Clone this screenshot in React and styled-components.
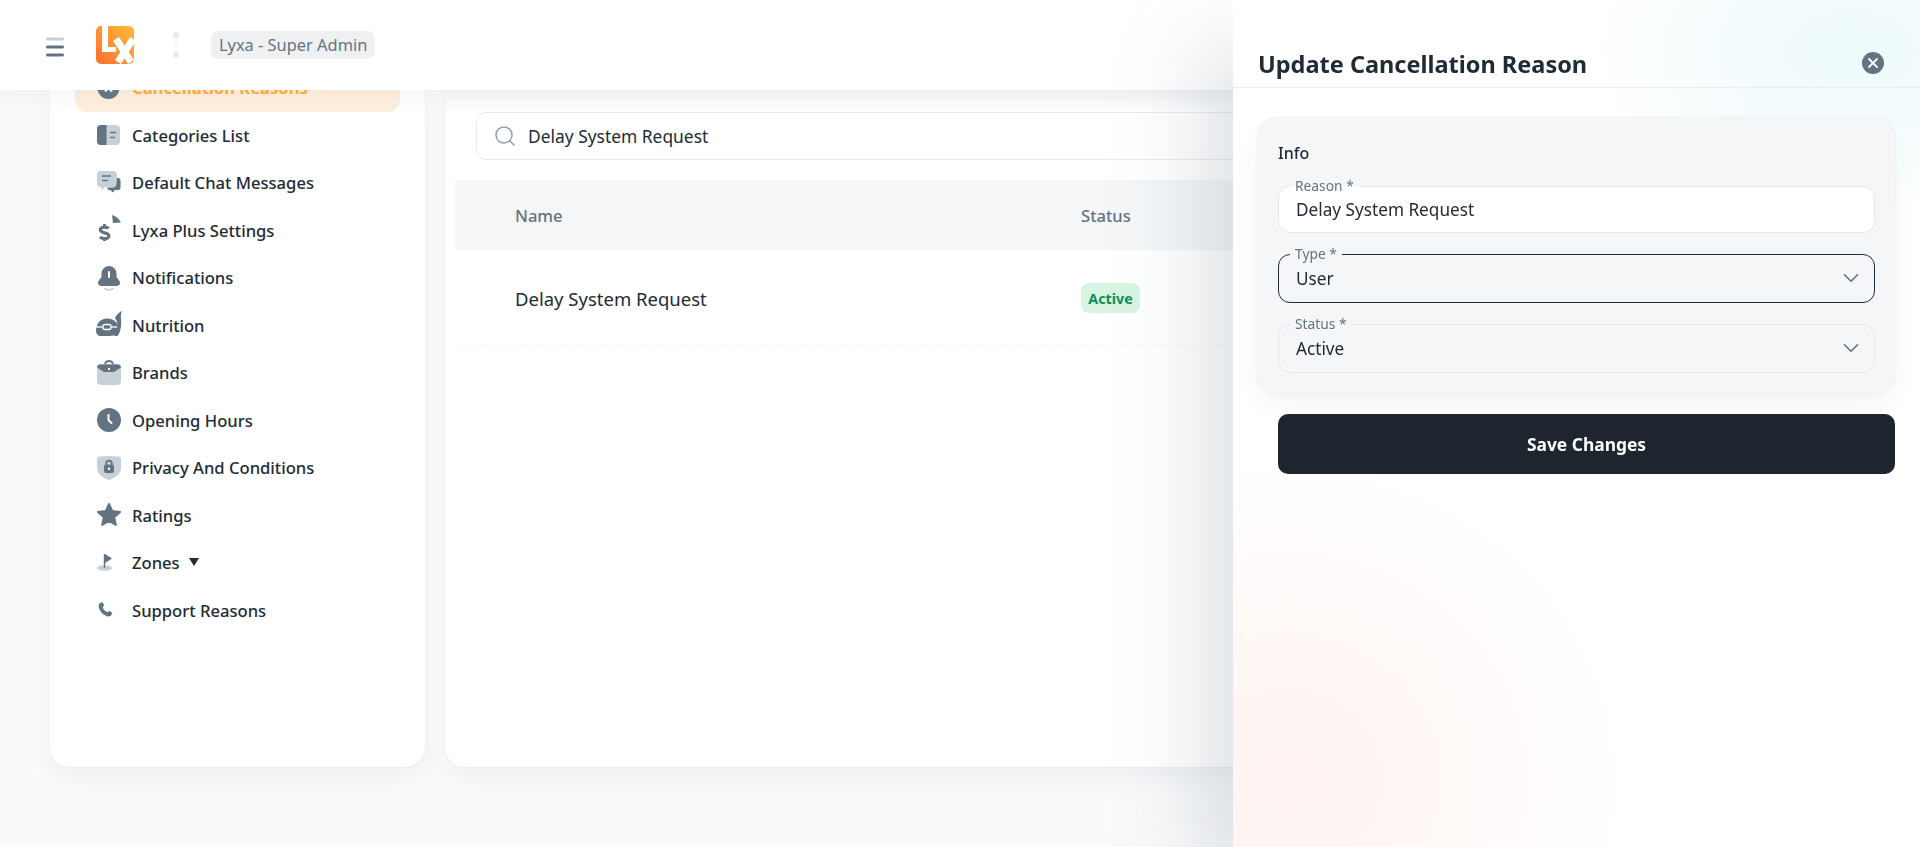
import React from 'react';
import styled, { createGlobalStyle } from 'styled-components';
import { Search, ChevronDown } from 'lucide-react';

const GlobalStyle = createGlobalStyle`
  * { box-sizing: border-box; }
  html, body { margin: 0; padding: 0; height: 100%; }
  body {
    font-family: "Noto Sans", "Open Sans", sans-serif;
    color: #212b36;
    background: #f9fafb;
  }
`;

const Page = styled.div`
  height: 847px;
  overflow: hidden;
  display: flex;
  flex-direction: column;
`;

const TopBar = styled.header`
  height: 90px;
  flex: none;
  display: flex;
  align-items: center;
  padding-left: 46px;
  background: #fff;
  position: relative;
  z-index: 2;
  box-shadow: 0 6px 18px rgba(145, 158, 171, 0.1);
`;

const MenuButton = styled.svg`
  width: 18px;
  height: 20px;
  margin-right: 32px;
  margin-top: 3px;
`;

const Logo = styled.svg`
  width: 38px;
  height: 38px;
`;

const Divider = styled.svg`
  width: 8px;
  height: 26px;
  margin: 0 31px 0 38px;
`;

const Chip = styled.span`
  height: 28px;
  padding: 0 8px;
  border-radius: 8px;
  background: #eff0f2;
  color: #637381;
  font-size: 16.4px;
  line-height: 28px;
`;

const Content = styled.div`
  height: 677px;
  display: flex;
  gap: 20px;
  padding-left: 50px;
`;

const Sidebar = styled.aside`
  width: 375px;
  flex: none;
  background: #fff;
  border-radius: 0 0 20px 20px;
  overflow: hidden;
  box-shadow: 0 0 2px rgba(145, 158, 171, 0.2), 0 12px 24px -4px rgba(145, 158, 171, 0.12);
`;

const NavList = styled.nav`
  margin: -26px 25px 0;
`;

const NavRow = styled.div`
  height: 47.5px;
  display: flex;
  align-items: center;
  gap: 11px;
  padding-left: 22px;
  border-radius: 12px;
  font-size: 16.6px;
  font-weight: ${(p) => (p.$active ? 700 : 500)};
  color: ${(p) => (p.$active ? '#ffab2d' : '#212b36')};
  background: ${(p) => (p.$active ? '#feeedd' : 'transparent')};
`;

const NavIcon = styled.svg`
  width: 24px;
  height: 24px;
  flex: none;
  overflow: visible;
`;

const Caret = styled.i`
  width: 0;
  height: 0;
  margin-left: -2px;
  border-left: 5px solid transparent;
  border-right: 5px solid transparent;
  border-top: 8px solid #212b36;
  margin-top: -2px;
`;

const Main = styled.main`
  flex: 1;
  background: linear-gradient(#f5f6f8, #fff 22px);
  border-radius: 0 0 20px 20px;
  box-shadow: 0 0 2px rgba(145, 158, 171, 0.2), 0 12px 24px -4px rgba(145, 158, 171, 0.12);
  padding-top: 22px;
`;

const SearchBox = styled.div`
  height: 48px;
  margin: 0 31px 20px;
  padding-left: 16px;
  display: flex;
  align-items: center;
  gap: 11px;
  background: #fff;
  border: 1px solid #e7eaed;
  border-radius: 10px;
  font-size: 17.4px;
  color: #919eab;

  span { color: #212b36; }
`;

const Row = styled.div`
  margin-left: 10px;
  display: grid;
  grid-template-columns: 566px 1fr;
  align-items: center;
  padding-left: 60px;
`;

const HeadRow = styled(Row)`
  height: 70px;
  background: #f4f6f8;
  color: #637381;
  font-size: 16.6px;
  font-weight: 500;
`;

const BodyRow = styled(Row)`
  height: 96px;
  padding-top: 1px;
  border-bottom: 1px dashed #f1f3f5;
  font-size: 18.5px;
`;

const Badge = styled.span`
  width: 59px;
  height: 30px;
  border-radius: 8px;
  background: #d8f5e3;
  color: #118d57;
  font-size: 14.3px;
  font-weight: 700;
  display: flex;
  align-items: center;
  justify-content: center;
`;

const Drawer = styled.section`
  position: fixed;
  top: 0;
  right: 0;
  bottom: 0;
  width: 687px;
  z-index: 5;
  background-color: #fff;
  background-image:
    radial-gradient(ellipse 270px 170px at 90% 6%, rgba(0, 184, 217, 0.07), rgba(0, 184, 217, 0) 100%),
    radial-gradient(ellipse 340px 320px at 8% 92%, rgba(255, 86, 48, 0.07), rgba(255, 86, 48, 0) 100%);
  box-shadow: -40px 40px 80px -8px rgba(145, 158, 171, 0.3);
`;

const DrawerHead = styled.div`
  height: 88px;
  padding: 48px 36px 0 25px;
  display: flex;
  justify-content: space-between;
  border-bottom: 1px solid #ebedef;
`;

const DrawerTitle = styled.h2`
  margin: 0;
  font-size: 23.5px;
  line-height: 32px;
  font-weight: 700;
  color: #212b36;
`;

const CloseIcon = styled.svg`
  width: 22px;
  height: 22px;
  margin-top: 4px;
`;

const DrawerBody = styled.div`
  padding: 29px 25px 0 24px;
`;

const InfoCard = styled.div`
  padding: 24px 20px 21px 21px;
  display: flex;
  flex-direction: column;
  gap: 13px;
  background: #f4f6f8;
  border-radius: 20px;
  box-shadow: 0 0 2px rgba(145, 158, 171, 0.2), 0 12px 24px -4px rgba(145, 158, 171, 0.12);
`;

const InfoTitle = styled.div`
  font-size: 16px;
  line-height: 24px;
  font-weight: 500;
`;

const Field = styled.fieldset`
  margin: 0;
  padding: 0 17px;
  height: ${(p) => p.$height}px;
  min-width: 0;
  border: 1px solid ${(p) => (p.$focused ? '#212b36' : '#e4e7ea')};
  border-radius: 12px;
  background: ${(p) => (p.$white ? '#fff' : 'transparent')};
`;

const FieldLabel = styled.legend`
  margin-left: -6px;
  padding: 0 5px;
  font-size: 13.8px;
  line-height: 16px;
  color: #637381;
`;

const FieldValue = styled.div`
  height: 30px;
  display: flex;
  align-items: center;
  justify-content: space-between;
  font-size: 17.2px;
  color: #212b36;
`;

const SelectValue = styled(FieldValue)`
  margin-top: 1px;

  svg { color: #637381; margin-right: -7px; }
`;

const SaveButton = styled.button`
  display: block;
  width: 617px;
  height: 60px;
  margin: 20px 0 0 21px;
  border: 0;
  border-radius: 10px;
  background: #1e252e;
  color: #fff;
  font-family: inherit;
  font-size: 17.4px;
  font-weight: 700;
`;

const DARK = '#637381';
const LIGHT = '#c8d0d7';

const icons = {
  cancel: (
    <>
      <circle cx="11.5" cy="12" r="11" fill={DARK} />
      <path d="M8 8.5l7 7M15 8.5l-7 7" stroke="#fff" strokeWidth="2" />
    </>
  ),
  categories: (
    <>
      <rect x="0" y="2" width="23" height="20" rx="4" fill={LIGHT} />
      <path d="M4 2h5.500v20H4a4 4 0 0 1-4-4V6a4 4 0 0 1 4-4z" fill={DARK} />
      <path d="M13 9.500h6M13 14.500h5" stroke={DARK} strokeWidth="1.600" />
    </>
  ),
  chat: (
    <>
      <path d="M3.500 0h13A3.500 3.500 0 0 1 20 3.500v9a3.500 3.500 0 0 1-3.500 3.500H8l-3 3-1-3A3.500 3.500 0 0 1 0 12.500v-9A3.500 3.500 0 0 1 3.500 0z" fill={LIGHT} />
      <path d="M5 5h9M5 9.500h6" stroke={DARK} strokeWidth="1.600" />
      <path d="M20 7h1a2.500 2.500 0 0 1 2.500 2.500v7a2.500 2.500 0 0 1-2.500 2.500h-3l-2.500 2.500-2-2.500h-2l-1.500-2.500h5.500a4 4 0 0 0 4-4z" fill={DARK} />
    </>
  ),
  plus: (
    <>
      <g transform="translate(1 -6)">
        <path d="M10.500 16.500C9 14.800 4.500 14.500 3 16.200c-1.800 2.300.5 4.100 3.500 4.600s5.300 2.300 3.900 4.600c-1.300 1.800-6.800 1.500-8.400-.4" fill="none" stroke={DARK} strokeWidth="3.200" />
        <path d="M6.500 12v3M6.500 26v3" stroke={DARK} strokeWidth="2.800" />
      </g>
      <path d="M15 -3c3.500.8 6.700 3.500 9 7.500L16 5z" fill={DARK} />
    </>
  ),
  bell: (
    <>
      <path d="M11 0a7.500 7.500 0 0 1 7.500 7.500v3c0 2 3.500 3.400 3.500 6.500 0 2-1.600 3-3.500 3h-15C1.600 20 0 19 0 17c0-3.100 3.500-4.500 3.500-6.500v-3A7.500 7.500 0 0 1 11 0z" fill={DARK} transform="translate(1 0)" />
      <path d="M12 6v5" stroke="#fff" strokeWidth="2" strokeLinecap="round" />
      <path d="M8 22.500c2.500 1.700 5.500 1.700 8 0" stroke={LIGHT} strokeWidth="1.800" fill="none" strokeLinecap="round" />
    </>
  ),
  nutrition: (
    <>
      <path d="M10 5.500c6.500 0 11 3.500 11 9 0 5.500-3 8.500-8 8.500H4c-3 0-5-2-5-5.500C-1 11 3.500 5.500 10 5.500z" fill={DARK} />
      <path d="M-1 14h21.500" stroke="#fff" strokeWidth="1.300" />
      <rect x="6" y="11.500" width="8" height="5" rx="2" fill={DARK} stroke="#fff" strokeWidth="1.300" />
      <path d="M18 5c1.500-3 3.500-5.500 7-7-1 2.500-1.500 4.500-1 7.500.6 5.500 0 13-3.500 17.500H17c3-4 4.500-11 2.500-15.500z" fill={DARK} />
    </>
  ),
  brands: (
    <>
      <path d="M4 3h16a4 4 0 0 1 4 4v13a4 4 0 0 1-4 4H4a4 4 0 0 1-4-4V7a4 4 0 0 1 4-4z" fill={LIGHT} />
      <path d="M3 3.500h18c1.600 0 2.800 1.200 3 3L17 11H7L0 6.500c.2-1.800 1.400-3 3-3z" fill={DARK} />
      <path d="M8 3c.5-2 2-3 4-3s3.500 1 4 3" fill="none" stroke={DARK} strokeWidth="1.800" />
      <path d="M11 8h2" stroke="#fff" strokeWidth="2" />
    </>
  ),
  clock: (
    <>
      <circle cx="12" cy="12" r="12" fill={DARK} />
      <path d="M11.500 7v5l3 3" fill="none" stroke="#fff" strokeWidth="2" strokeLinecap="round" strokeLinejoin="round" />
    </>
  ),
  shield: (
    <>
      <path d="M2 0.500c6-.8 14-.8 20 0 1.200.2 2 1 2 2.200V12c0 5.500-5.500 10-12 12C5.500 22 0 17.500 0 12V2.700C0 1.500.8.700 2 .500z" fill={LIGHT} />
      <rect x="7" y="8.500" width="10" height="8.500" rx="2" fill={DARK} />
      <path d="M9.200 9V7.500a2.800 2.800 0 0 1 5.600 0V9" fill="none" stroke={DARK} strokeWidth="1.800" />
      <circle cx="12" cy="12.700" r="1.200" fill="#fff" />
    </>
  ),
  star: (
    <path d="M12 1l3.200 7 7.800.9-5.800 5.300 1.600 7.700-6.800-3.900-6.800 3.900 1.600-7.700L1 8.900 8.800 8z" fill={DARK} stroke={DARK} strokeWidth="2" strokeLinejoin="round" />
  ),
  zones: (
    <>
      <ellipse cx="7.500" cy="17" rx="7.500" ry="2.800" fill={LIGHT} />
      <path d="M7.500 3v14" stroke={DARK} strokeWidth="1.400" />
      <path d="M8 3l7 4.500-7 4.500z" fill={DARK} />
    </>
  ),
  phone: (
    <path d="M2.500 5.500l2.800-1.500 2 3.300-1.600 1.700c.8 2.800 2.500 4.500 5 5.300l1.700-1.500 3 2.300-1.500 2.700c-1.500 1-3.500.9-6-.5C4.500 15.300 2.500 12.500 1.800 9.500c-.3-1.500 0-3 .7-4z" fill={DARK} />
  ),
};

const navItems = [
  { key: 'cancel', label: 'Cancellation Reasons', active: true },
  { key: 'categories', label: 'Categories List' },
  { key: 'chat', label: 'Default Chat Messages' },
  { key: 'plus', label: 'Lyxa Plus Settings' },
  { key: 'bell', label: 'Notifications' },
  { key: 'nutrition', label: 'Nutrition' },
  { key: 'brands', label: 'Brands' },
  { key: 'clock', label: 'Opening Hours' },
  { key: 'shield', label: 'Privacy And Conditions' },
  { key: 'star', label: 'Ratings' },
  { key: 'zones', label: 'Zones', caret: true },
  { key: 'phone', label: 'Support Reasons' },
];

export default function App() {
  return (
    <Page>
      <GlobalStyle />
      <TopBar>
        <MenuButton viewBox="0 0 18 20">
          <path d="M1.500 2h15" stroke={LIGHT} strokeWidth="3" strokeLinecap="round" />
          <path d="M1.500 10h15M1.500 18h15" stroke={DARK} strokeWidth="3" strokeLinecap="round" />
        </MenuButton>
        <Logo viewBox="0 0 38 38">
          <defs>
            <linearGradient id="logoFill" x1="0" y1="1" x2="1" y2="0">
              <stop offset="0" stopColor="#fe6f30" />
              <stop offset="1" stopColor="#ffbb3a" />
            </linearGradient>
            <clipPath id="logoClip">
              <rect width="38" height="38" rx="5" />
            </clipPath>
          </defs>
          <rect width="38" height="38" rx="5" fill="url(#logoFill)" />
          <g clipPath="url(#logoClip)">
            <path d="M6 0h6v21h8v5H6z" fill="#fff" />
            <path d="M20 13l15 23M37 13L22 36" stroke="#fff" strokeWidth="7" fill="none" />
          </g>
        </Logo>
        <Divider viewBox="0 0 8 26">
          <circle cx="4" cy="3" r="3" fill="#e9ebee" />
          <circle cx="4" cy="23" r="3" fill="#e9ebee" />
          <path d="M4 6v14" stroke="#eff0f2" strokeWidth="1" />
        </Divider>
        <Chip>Lyxa - Super Admin</Chip>
      </TopBar>
      <Content>
        <Sidebar>
          <NavList>
            {navItems.map((item) => (
              <NavRow key={item.key} $active={item.active}>
                <NavIcon viewBox="0 0 24 24">{icons[item.key]}</NavIcon>
                {item.label}
                {item.caret && <Caret />}
              </NavRow>
            ))}
          </NavList>
        </Sidebar>
        <Main>
          <SearchBox>
            <Search size={24} strokeWidth={1.5} />
            <span>Delay System Request</span>
          </SearchBox>
          <HeadRow>
            <div>Name</div>
            <div>Status</div>
          </HeadRow>
          <BodyRow>
            <div>Delay System Request</div>
            <Badge>Active</Badge>
          </BodyRow>
        </Main>
      </Content>
      <Drawer>
        <DrawerHead>
          <DrawerTitle>Update Cancellation Reason</DrawerTitle>
          <CloseIcon viewBox="0 0 22 22">
            <circle cx="11" cy="11" r="11" fill={DARK} />
            <path d="M7 7l8 8M15 7l-8 8" stroke="#fff" strokeWidth="1.800" strokeLinecap="round" />
          </CloseIcon>
        </DrawerHead>
        <DrawerBody>
          <InfoCard>
            <InfoTitle>Info</InfoTitle>
            <Field $height={55} $white>
              <FieldLabel>Reason *</FieldLabel>
              <FieldValue>Delay System Request</FieldValue>
            </Field>
            <Field $height={57} $focused>
              <FieldLabel>Type *</FieldLabel>
              <SelectValue>
                User
                <ChevronDown size={26} strokeWidth={1.5} />
              </SelectValue>
            </Field>
            <Field $height={57}>
              <FieldLabel>Status *</FieldLabel>
              <SelectValue>
                Active
                <ChevronDown size={26} strokeWidth={1.5} />
              </SelectValue>
            </Field>
          </InfoCard>
          <SaveButton>Save Changes</SaveButton>
        </DrawerBody>
      </Drawer>
    </Page>
  );
}
